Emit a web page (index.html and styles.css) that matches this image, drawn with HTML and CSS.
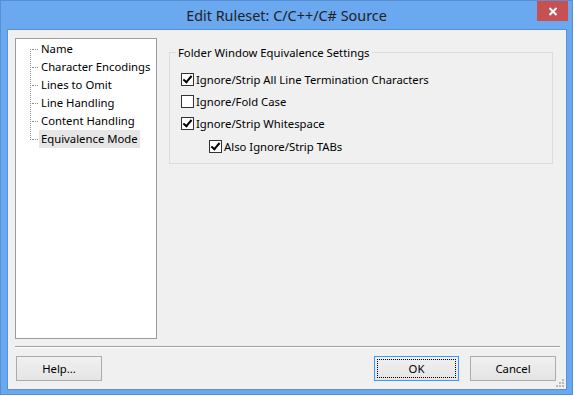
FILE: index.html
```html
<!DOCTYPE html>
<html lang="en">
<head>
    <meta charset="UTF-8">
    <title>Edit Ruleset: C/C++/C# Source</title>
    <link rel="stylesheet" href="styles.css">
</head>
<body>
    <div class="window">
        <div class="titlebar">Edit Ruleset: C/C++/C# Source</div>
        <div class="close-btn">
            <svg width="10" height="9" viewBox="0 0 10 9"><path d="M1.5 1 L8.5 8 M8.5 1 L1.5 8" stroke="#fff" stroke-width="2"/></svg>
        </div>
        <div class="client">
            <div class="main">
                <div class="tree">
                    <ul>
                        <li><span>Name</span></li>
                        <li><span>Character Encodings</span></li>
                        <li><span>Lines to Omit</span></li>
                        <li><span>Line Handling</span></li>
                        <li><span>Content Handling</span></li>
                        <li class="selected"><span>Equivalence Mode</span></li>
                    </ul>
                </div>
                <div class="panel">
                    <fieldset class="group">
                        <legend>Folder Window Equivalence Settings</legend>
                        <div class="options">
                            <label class="check"><span class="box checked"></span>Ignore/Strip All Line Termination Characters</label>
                            <label class="check"><span class="box"></span>Ignore/Fold Case</label>
                            <label class="check"><span class="box checked"></span>Ignore/Strip Whitespace</label>
                            <label class="check sub"><span class="box checked"></span>Also Ignore/Strip TABs</label>
                        </div>
                    </fieldset>
                </div>
            </div>
            <div class="separator"></div>
            <div class="buttons">
                <button class="btn">Help...</button>
                <div class="spacer"></div>
                <button class="btn default">OK</button>
                <button class="btn">Cancel</button>
            </div>
            <svg class="grip" width="8" height="8" viewBox="0 0 8 8">
                <rect x="6" y="0" width="2" height="2" fill="#b9b9b9"/>
                <rect x="3" y="3" width="2" height="2" fill="#b9b9b9"/>
                <rect x="6" y="3" width="2" height="2" fill="#b9b9b9"/>
                <rect x="0" y="6" width="2" height="2" fill="#b9b9b9"/>
                <rect x="3" y="6" width="2" height="2" fill="#b9b9b9"/>
                <rect x="6" y="6" width="2" height="2" fill="#b9b9b9"/>
            </svg>
        </div>
    </div>
</body>
</html>
```

FILE: styles.css
```css
* {
    box-sizing: border-box;
    margin: 0;
    padding: 0;
}
body {
    font-family: "Noto Sans", "Open Sans", sans-serif;
    font-size: 11.3px;
    color: #000;
    background-color: #ffffff;
}
.window {
    position: relative;
    width: 573px;
    height: 395px;
    border: 1px solid #5a8ed2;
    background-color: #6aa8f0;
    display: flex;
    flex-direction: column;
}
.titlebar {
    height: 28px;
    display: flex;
    align-items: center;
    justify-content: center;
    font-size: 14.4px;
    color: #222;
}
.close-btn {
    position: absolute;
    top: 0;
    right: 4px;
    width: 31px;
    height: 20px;
    background-color: #c75050;
    display: flex;
    align-items: center;
    justify-content: center;
}
.client {
    position: relative;
    flex: 1;
    margin: 0 5px 4px 6px;
    border: 1px solid #5b8fd5;
    background-color: #f0f0f0;
    display: flex;
    flex-direction: column;
    padding: 8px 10px 0 7px;
}
.main {
    display: flex;
    gap: 12px;
}
.tree {
    width: 142px;
    height: 301px;
    border: 1px solid #9c9c9c;
    background-color: #fff;
    padding-top: 1px;
}
.tree ul {
    position: relative;
    list-style: none;
}
.tree ul::before {
    content: "";
    position: absolute;
    left: 14px;
    top: 9px;
    bottom: 8px;
    border-left: 1px dotted #8c8c8c;
}
.tree li {
    position: relative;
    height: 18px;
    line-height: 18px;
    padding-left: 23px;
    white-space: nowrap;
}
.tree li::before {
    content: "";
    position: absolute;
    left: 16px;
    top: 9px;
    width: 6px;
    border-top: 1px dotted #8c8c8c;
}
.tree li span {
    display: inline-block;
    padding: 0 2px;
    height: 18px;
}
.tree li.selected span {
    background-color: #e6e6e6;
}
.panel {
    flex: 1;
    padding-right: 3px;
}
.group {
    margin-top: 7px;
    height: 119px;
    border: 1px solid #dcdcdc;
    padding: 0 0 5px 11px;
}
.group legend {
    margin-left: -5px;
    padding: 0 2px;
    line-height: 15px;
}
.options {
    margin-top: 8px;
}
.check {
    display: flex;
    align-items: center;
    height: 22.3px;
    white-space: nowrap;
}
.check.sub {
    margin-left: 28px;
}
.box {
    width: 13px;
    height: 13px;
    border: 1px solid #333;
    background-color: #fff;
    margin-right: 2px;
    position: relative;
}
.box.checked::after {
    content: "";
    position: absolute;
    left: 3px;
    top: 0px;
    width: 3px;
    height: 7px;
    border-right: 2px solid #000;
    border-bottom: 2px solid #000;
    transform: rotate(40deg);
}
.separator {
    margin-top: 7px;
    margin-right: -4px;
    border-top: 1px solid #a0a0a0;
    border-bottom: 1px solid #ffffff;
}
.buttons {
    display: flex;
    gap: 11px;
    margin-top: 8px;
    padding-left: 1px;
}
.spacer {
    flex: 1;
}
.btn {
    width: 86px;
    height: 25px;
    border: 1px solid #acacac;
    background: linear-gradient(#f0f0f0, #e5e5e5);
    font-family: "Noto Sans", "Open Sans", sans-serif;
    font-size: 11.3px;
    color: #000;
}
.btn.default {
    width: 85px;
    border-color: #3399ff;
    outline: 1px dotted #000;
    outline-offset: -4px;
}
.grip {
    position: absolute;
    right: 2px;
    bottom: 2px;
}
```
